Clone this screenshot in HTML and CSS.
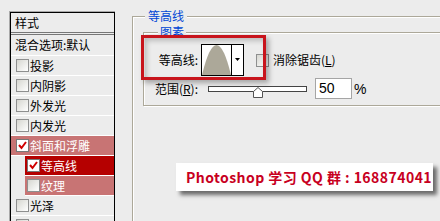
FILE: index.html
```html
<!DOCTYPE html>
<html>
<head>
<meta charset="utf-8">
<link rel="stylesheet" href="styles.css">
</head>
<body>
<div class="list">
  <div class="list-inner">
    <div class="hdr">样式</div>
    <div class="row plain">混合选项:默认</div>
    <div class="row"><span class="cb"></span>投影</div>
    <div class="row"><span class="cb"></span>内阴影</div>
    <div class="row"><span class="cb"></span>外发光</div>
    <div class="row"><span class="cb"></span>内发光</div>
    <div class="row sel"><span class="cb on"><svg width="11" height="11" viewBox="0 0 11 11"><polyline points="2,5 4.5,8 9,2" fill="none" stroke="#d00000" stroke-width="2"/></svg></span>斜面和浮雕</div>
    <div class="row sub cur"><span class="cb on"><svg width="11" height="11" viewBox="0 0 11 11"><polyline points="2,5 4.5,8 9,2" fill="none" stroke="#d00000" stroke-width="2"/></svg></span>等高线</div>
    <div class="row sub sel"><span class="cb"></span>纹理</div>
    <div class="row"><span class="cb"></span>光泽</div>
    <div class="row"><span class="cb"></span></div>
  </div>
</div>
<fieldset class="group outer">
  <legend class="lg-outer">等高线</legend>
  <fieldset class="group inner">
    <legend class="lg-inner">图素</legend>
    <div class="frow">
      <span class="lbl">等高线:</span>
      <div class="contour">
        <svg class="curve" width="29" height="30" viewBox="0 0 29 30"><path d="M0 30 Q14.5 -30 29 30 Z" fill="#aca899"/></svg>
        <div class="dd"><svg width="5" height="3" viewBox="0 0 5 3"><polygon points="0,0 5,0 2.5,3" fill="#000"/></svg></div>
      </div>
      <span class="cb2"></span><span class="txt">消除锯齿(<u>L</u>)</span>
    </div>
    <div class="frow r2">
      <span class="lbl">范围(<u>R</u>):</span>
      <div class="slider">
        <div class="track"></div>
        <svg class="thumb" width="10" height="11" viewBox="0 0 10 11"><polygon points="0.5,10.5 0.5,4.5 5,0.5 9.5,4.5 9.5,10.5" fill="#fff" stroke="#555"/></svg>
      </div>
      <div class="num">50</div><span class="pct">%</span>
    </div>
  </fieldset>
</fieldset>
<div class="hl"></div>
<div class="mark">Photoshop 学习 QQ 群 : 168874041</div>
</body>
</html>
```
FILE: styles.css
```css
html, body { margin: 0; height: 221px; overflow: hidden; }
body {
  background: #ececec;
  display: flex;
  align-items: flex-start;
  font: 12px/1 "Noto Sans CJK SC", "Noto Sans", sans-serif;
  color: #000;
}
.list {
  margin: 11px 0 0 9px;
  width: 106px;
  box-sizing: border-box;
  border-top: 1px solid #a9a9a9;
  border-left: 1px solid #a9a9a9;
  flex-shrink: 0;
}
.list-inner {
  border: 1px solid #000;
  border-bottom: none;
  height: 300px;
}
.hdr {
  height: 19px;
  line-height: 19px;
  padding-left: 4px;
  border-bottom: 3px double #777;
}
.row {
  height: 19px;
  border-bottom: 1px solid #fff;
  display: flex;
  align-items: center;
  padding-left: 5px;
  gap: 1px;
}
.row.plain { height: 20px; padding-left: 4px; }
.row.sel { background: #c87474; color: #fff; }
.row.cur { background: #b50000; color: #fff; }
.row.sub { margin-left: 14px; padding-left: 2px; }
.cb, .cb2 {
  width: 13px;
  height: 13px;
  box-sizing: border-box;
  border: 1px solid #8e8f8f;
  background: linear-gradient(135deg, #d6d6d0, #ffffff);
  display: flex;
  align-items: center;
  justify-content: center;
  flex-shrink: 0;
}
.cb.on { background: #fff; border-color: #777; }

.group {
  border: 1px solid #aca899;
  box-shadow: inset 1px 1px 0 #fff, 1px 1px 0 #fff;
  box-sizing: border-box;
  min-width: 0;
}
.outer {
  margin: 9px 0 0 17px;
  padding: 2px 0 0 10px;
  width: 400px;
  height: 260px;
  flex-shrink: 0;
}
.inner {
  margin: 0;
  padding: 5px 0 6px 6px;
  width: 330px;
}
legend {
  line-height: 14px;
  color: #0046d5;
  background: #ececec;
}
.lg-outer { padding: 0 3px; margin-left: 2px; }
.lg-inner { padding: 0 2px; margin-left: 8px; }

.frow { display: flex; align-items: center; height: 32px; }
.frow.r2 { height: 21px; margin-top: 2px; }
.lbl { width: 48px; text-align: right; margin-right: 3px; flex-shrink: 0; }
.contour {
  width: 43px;
  height: 32px;
  box-sizing: border-box;
  border: 1px solid #000;
  background: #fff;
  display: flex;
  flex-shrink: 0;
}
.curve { display: block; }
.dd {
  width: 12px;
  border-left: 1px solid #000;
  box-sizing: border-box;
  display: flex;
  align-items: center;
  justify-content: center;
  padding-bottom: 2px;
}
.dd svg { display: block; }
.cb2 { margin-left: 12px; margin-right: 4px; }
.slider {
  position: relative;
  width: 99px;
  height: 21px;
  margin-left: 7px;
  flex-shrink: 0;
}
.track {
  margin-top: 8px;
  height: 6px;
  box-sizing: border-box;
  border: 1px solid #444;
  background: #fff;
}
.thumb { position: absolute; left: 45px; top: 9px; display: block; }
.num {
  width: 37px;
  height: 21px;
  box-sizing: border-box;
  border: 1px solid #a5a5a5;
  background: #fff;
  margin-left: 8px;
  padding-left: 3px;
  font: 14px/19px "Liberation Sans", Arial, sans-serif;
  flex-shrink: 0;
}
.pct { margin-left: 2px; font: 14px/1 "Liberation Sans", Arial, sans-serif; }

.hl {
  position: absolute;
  left: 141px;
  top: 35px;
  width: 125px;
  height: 45px;
  box-sizing: border-box;
  border: 3px solid #c8141c;
  box-shadow: 3px 3px 5px rgba(0,0,0,.3), inset 3px 3px 5px rgba(0,0,0,.2);
}
.mark {
  position: absolute;
  left: 176px;
  top: 163px;
  width: 257px;
  height: 28px;
  box-sizing: border-box;
  padding-left: 10px;
  background: #fff;
  box-shadow: 4px 4px 4px rgba(0,0,0,.55);
  color: #c8001e;
  font: bold 14px/28px "Noto Sans CJK SC", "Noto Sans", sans-serif;
  letter-spacing: 0.45px;
  white-space: nowrap;
}
```
